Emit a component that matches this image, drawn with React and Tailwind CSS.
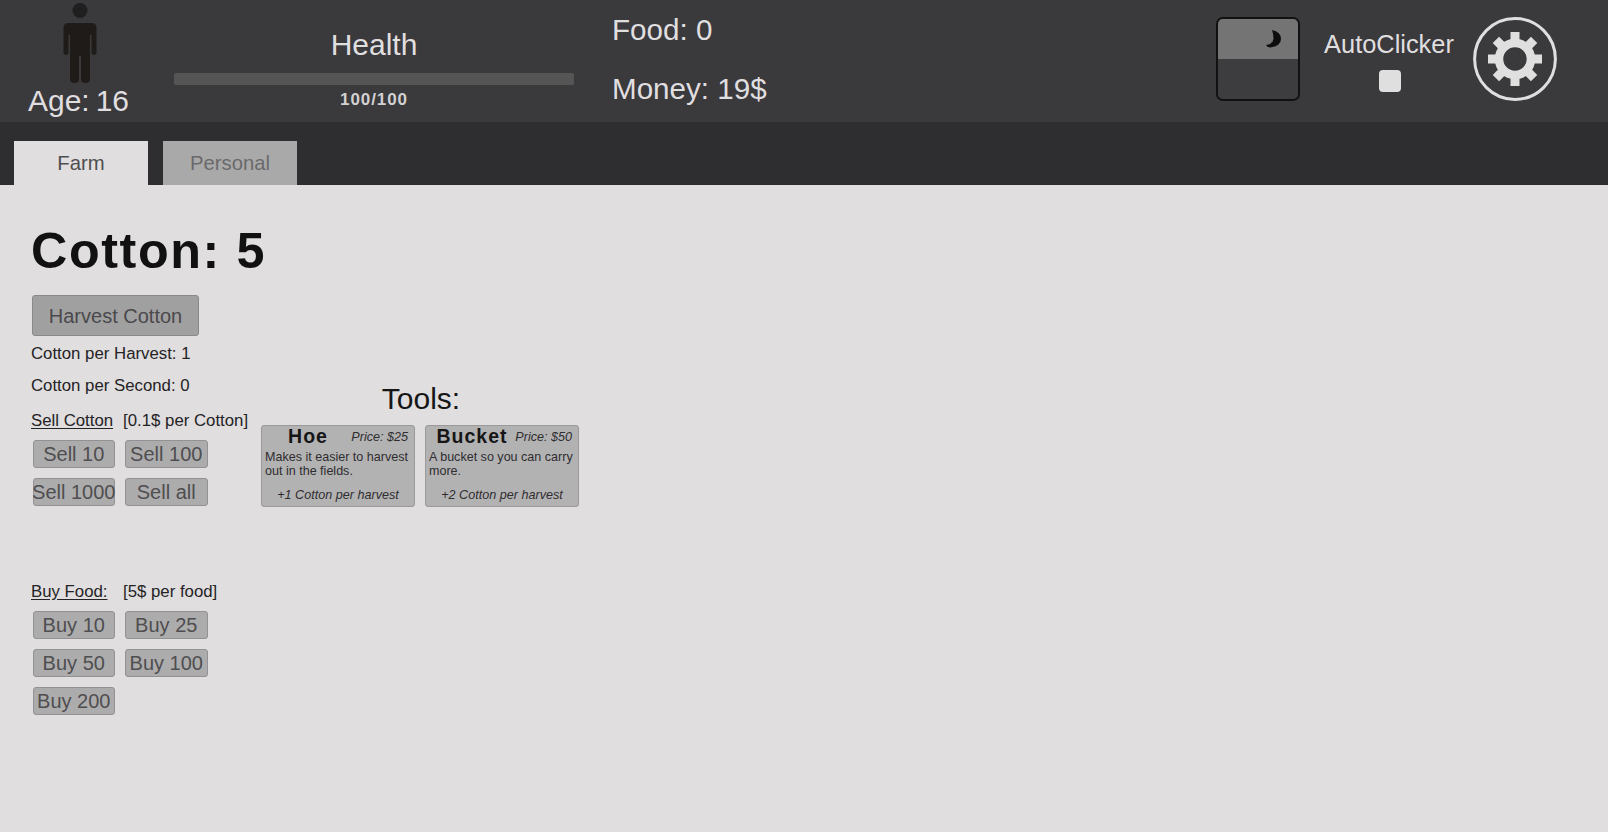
const font = { fontFamily: '"Liberation Sans", Arial, sans-serif' };

function SmallBtn({ children }) {
  return (
    <div className="h-[28px] flex items-center justify-center rounded-[3px] bg-[#adacad] border border-[#939193] text-[#4f4e50] text-[20px] leading-none whitespace-nowrap">
      {children}
    </div>
  );
}

function ToolCard({ name, price, desc, bonus }) {
  return (
    <div className="w-[154px] h-[82px] rounded-[3px] bg-[#b3b2b3] border border-[#9a999a] px-[3px] flex flex-col text-[#2e2d2f]">
      <div className="flex items-center h-[20px] mt-[1px]">
        <div className="w-[86px] text-center font-bold text-[19.5px] tracking-[1px] text-[#161617] leading-none whitespace-nowrap">{name}</div>
        <div className="flex-1 text-right pr-[3px] italic text-[12.6px] leading-none whitespace-nowrap">{price}</div>
      </div>
      <div className="text-[12.55px] leading-[14.4px] mt-[3px] h-[29px] whitespace-pre">{desc}</div>
      <div className="text-center italic text-[12.6px] leading-none mt-[10px] whitespace-nowrap">{bonus}</div>
    </div>
  );
}

function Person() {
  return (
    <svg width="36" height="82" viewBox="0 0 36 82" className="block">
      <circle cx="18" cy="9.5" r="7.5" fill="#201f20" />
      <path
        d="M7 22 Q1.5 22 1.5 27 V51 Q1.5 54 4 54 Q6.5 54 6.5 51 V34 H8 V78 Q8 82 12.5 82 Q17 82 17 78 V55 H19 V78 Q19 82 23.5 82 Q28 82 28 78 V34 H29.5 V51 Q29.5 54 32 54 Q34.5 54 34.5 51 V27 Q34.5 22 29 22 Z"
        fill="#1f1b19"
      />
    </svg>
  );
}

function Moon() {
  return (
    <svg width="16" height="18" viewBox="0 0 16 18" className="block">
      <path d="M6 0 Q15 2 15 9 Q15 16 4 17.5 Q1 17 0 15 Q7 14 7.5 9 Q7.5 4 6 0 Z" fill="#0d0d0d" />
    </svg>
  );
}

function Gear() {
  const teeth = [0, 45, 90, 135, 180, 225, 270, 315];
  return (
    <svg width="84" height="84" viewBox="0 0 84 84" className="block">
      <circle cx="42" cy="42" r="40.4" fill="none" stroke="#e0dfe0" strokeWidth="3" />
      <circle cx="42" cy="42" r="16" fill="none" stroke="#e0dfe0" strokeWidth="8.5" />
      {teeth.map((a) => (
        <rect key={a} x="37.5" y="15" width="9" height="10" fill="#e0dfe0" transform={`rotate(${a} 42 42)`} />
      ))}
    </svg>
  );
}

export default function App() {
  return (
    <div className="w-[1608px] h-[832px] overflow-hidden flex flex-col bg-[#e0dedf]" style={font}>
      <header className="h-[122px] bg-[#3a393b] flex text-[#e0dfe0] shrink-0">
        <div className="w-[160px] flex flex-col items-center">
          <div className="mt-[1px]">
            <Person />
          </div>
          <div className="text-[30px] leading-[34px] ml-[-3px] mt-[1px] whitespace-nowrap">Age:&thinsp;16</div>
        </div>
        <div className="w-[400px] ml-[14px] flex flex-col items-center pt-[28px]">
          <div className="text-[30px] leading-[34px]">Health</div>
          <div className="w-full h-[12px] rounded-[2px] bg-[#565556] mt-[11px]" />
          <div className="text-[17px] font-bold leading-none tracking-[0.9px] mt-[6px] text-[#d2d1d2]">100/100</div>
        </div>
        <div className="ml-[38px] flex flex-col text-[29.6px] leading-[34px] pt-[13px] gap-[25px]">
          <div>Food: 0</div>
          <div>Money: 19$</div>
        </div>
        <div className="flex-1" />
        <div className="w-[84px] h-[84px] mt-[17px] rounded-[7px] border-2 border-[#111112] overflow-hidden flex flex-col">
          <div className="h-[40px] bg-[#757475] flex justify-end pt-[11px] pr-[16px]">
            <Moon />
          </div>
          <div className="flex-1 bg-[#3d3c3e]" />
        </div>
        <div className="w-[130px] ml-[24px] flex flex-col items-center pt-[27px]">
          <div className="text-[25.4px] leading-[34px] whitespace-nowrap">AutoClicker</div>
          <div className="w-[22px] h-[22px] rounded-[4px] bg-[#e0dfe0] mt-[9px] ml-[2px]" />
        </div>
        <div className="ml-[19px] mr-[51px] mt-[17px]">
          <Gear />
        </div>
      </header>

      <nav className="h-[63px] bg-[#2e2d2f] flex items-end pl-[14px] gap-[15px] text-[20.3px] shrink-0">
        <div className="w-[134px] h-[44px] bg-[#e0dedf] text-[#4f4e50] flex items-center justify-center">Farm</div>
        <div className="w-[134px] h-[44px] bg-[#aaa9aa] text-[#6a696b] flex items-center justify-center">Personal</div>
      </nav>

      <main className="flex-1 flex pl-[31px] text-[#242325]">
        <div className="w-[230px] shrink-0">
          <h1 className="font-bold text-[50.3px] leading-[58px] tracking-[1.6px] text-[#111112] mt-[37px] whitespace-nowrap">Cotton: 5</h1>
          <div className="ml-[1px] mt-[15px] w-[167px] h-[41px] rounded-[3px] bg-[#a0a0a1] border border-[#8a898a] text-[#4a494b] text-[20px] flex items-center justify-center whitespace-nowrap">
            Harvest Cotton
          </div>
          <div className="text-[16.8px] leading-[20px] mt-[8px]">Cotton per Harvest: 1</div>
          <div className="text-[16.8px] leading-[20px] mt-[12px]">Cotton per Second: 0</div>
          <div className="flex text-[16.8px] leading-[20px] mt-[15px] whitespace-nowrap">
            <span className="underline underline-offset-2">Sell Cotton</span>
            <span className="ml-[10px]">[0.1$ per Cotton]</span>
          </div>
          <div className="grid grid-cols-[82.5px_82.5px] gap-x-[10px] gap-y-[10px] ml-[1.5px] mt-[9px]">
            <SmallBtn>Sell 10</SmallBtn>
            <SmallBtn>Sell 100</SmallBtn>
            <SmallBtn>Sell 1000</SmallBtn>
            <SmallBtn>Sell all</SmallBtn>
          </div>
          <div className="flex text-[16.8px] leading-[20px] mt-[76px] whitespace-nowrap">
            <span className="underline underline-offset-2">Buy Food:</span>
            <span className="ml-[15.5px]">[5$ per food]</span>
          </div>
          <div className="grid grid-cols-[82.5px_82.5px] gap-x-[10px] gap-y-[10px] ml-[1.5px] mt-[9px]">
            <SmallBtn>Buy 10</SmallBtn>
            <SmallBtn>Buy 25</SmallBtn>
            <SmallBtn>Buy 50</SmallBtn>
            <SmallBtn>Buy 100</SmallBtn>
            <SmallBtn>Buy 200</SmallBtn>
          </div>
        </div>
        <div className="w-[319px] shrink-0 pt-[196px]">
          <div className="text-center text-[30px] leading-[36px] text-[#161617] ml-[1px]">Tools:</div>
          <div className="flex gap-[10px] mt-[8px]">
            <ToolCard name="Hoe" price="Price: $25" desc={"Makes it easier to harvest\nout in the fields."} bonus="+1 Cotton per harvest" />
            <ToolCard name="Bucket" price="Price: $50" desc={"A bucket so you can carry\nmore."} bonus="+2 Cotton per harvest" />
          </div>
        </div>
      </main>
    </div>
  );
}
